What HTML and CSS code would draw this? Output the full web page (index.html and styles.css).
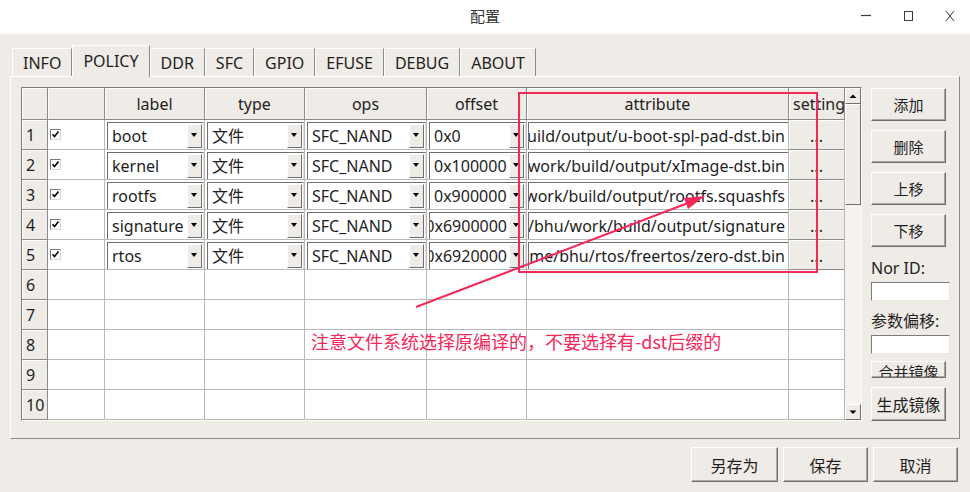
FILE: index.html
```html
<!DOCTYPE html>
<html lang="zh-CN">
<head>
    <meta charset="UTF-8">
    <title>配置</title>
    <link rel="stylesheet" href="styles.css">
</head>
<body>
<div class="window">
    <div class="titlebar">
        <span class="title">配置</span>
        <div class="controls">
            <svg viewBox="0 0 16 16"><path d="M3 6.5h10" stroke="#3a3a3a" stroke-width="1.2"/></svg>
            <svg viewBox="0 0 16 16"><rect x="4.5" y="2.5" width="8" height="9" fill="none" stroke="#3a3a3a" stroke-width="1"/></svg>
            <svg viewBox="0 0 16 16"><path d="M4 2l8 10M12 2l-8 10" stroke="#3a3a3a" stroke-width="1"/></svg>
        </div>
    </div>

    <ul class="tabs">
        <li class="tab">INFO</li>
        <li class="tab active">POLICY</li>
        <li class="tab">DDR</li>
        <li class="tab">SFC</li>
        <li class="tab">GPIO</li>
        <li class="tab">EFUSE</li>
        <li class="tab">DEBUG</li>
        <li class="tab">ABOUT</li>
    </ul>

    <div class="panel">
        <div class="gridbox">
            <table class="grid">
                <colgroup>
                    <col style="width:26px"><col style="width:57px"><col style="width:100px"><col style="width:100px">
                    <col style="width:122px"><col style="width:100px"><col style="width:262px"><col style="width:56px">
                </colgroup>
                <thead>
                    <tr>
                        <th><div class="c"></div></th>
                        <th><div class="c"></div></th>
                        <th><div class="c">label</div></th>
                        <th><div class="c">type</div></th>
                        <th><div class="c">ops</div></th>
                        <th><div class="c">offset</div></th>
                        <th><div class="c">attribute</div></th>
                        <th><div class="c setting-h">setting</div></th>
                    </tr>
                </thead>
                <tbody>
                    <tr>
                        <th class="rh"><div class="c">1</div></th>
                        <td><div class="c"><span class="box"><svg viewBox="0 0 9 9"><path d="M1.5 4.2l2 2.2 4-5" fill="none" stroke="#000" stroke-width="1.6"/></svg></span></div></td>
                        <td><div class="combo"><span class="val">boot</span><span class="drop"></span></div></td>
                        <td><div class="combo"><span class="val">文件</span><span class="drop"></span></div></td>
                        <td><div class="combo"><span class="val">SFC_NAND</span><span class="drop"></span></div></td>
                        <td><div class="combo"><span class="val">0x0</span><span class="drop"></span></div></td>
                        <td><div class="field"><span>/home/bhu/work/build/output/u-boot-spl-pad-dst.bin</span></div></td>
                        <td class="set"><div class="c">...</div></td>
                    </tr>
                    <tr>
                        <th class="rh"><div class="c">2</div></th>
                        <td><div class="c"><span class="box"><svg viewBox="0 0 9 9"><path d="M1.5 4.2l2 2.2 4-5" fill="none" stroke="#000" stroke-width="1.6"/></svg></span></div></td>
                        <td><div class="combo"><span class="val">kernel</span><span class="drop"></span></div></td>
                        <td><div class="combo"><span class="val">文件</span><span class="drop"></span></div></td>
                        <td><div class="combo"><span class="val">SFC_NAND</span><span class="drop"></span></div></td>
                        <td><div class="combo"><span class="val">0x100000</span><span class="drop"></span></div></td>
                        <td><div class="field"><span>/home/bhu/work/build/output/xImage-dst.bin</span></div></td>
                        <td class="set"><div class="c">...</div></td>
                    </tr>
                    <tr>
                        <th class="rh"><div class="c">3</div></th>
                        <td><div class="c"><span class="box"><svg viewBox="0 0 9 9"><path d="M1.5 4.2l2 2.2 4-5" fill="none" stroke="#000" stroke-width="1.6"/></svg></span></div></td>
                        <td><div class="combo"><span class="val">rootfs</span><span class="drop"></span></div></td>
                        <td><div class="combo"><span class="val">文件</span><span class="drop"></span></div></td>
                        <td><div class="combo"><span class="val">SFC_NAND</span><span class="drop"></span></div></td>
                        <td><div class="combo"><span class="val">0x900000</span><span class="drop"></span></div></td>
                        <td><div class="field"><span>/home/bhu/work/build/output/rootfs.squashfs</span></div></td>
                        <td class="set"><div class="c">...</div></td>
                    </tr>
                    <tr>
                        <th class="rh"><div class="c">4</div></th>
                        <td><div class="c"><span class="box"><svg viewBox="0 0 9 9"><path d="M1.5 4.2l2 2.2 4-5" fill="none" stroke="#000" stroke-width="1.6"/></svg></span></div></td>
                        <td><div class="combo"><span class="val">signature</span><span class="drop"></span></div></td>
                        <td><div class="combo"><span class="val">文件</span><span class="drop"></span></div></td>
                        <td><div class="combo"><span class="val">SFC_NAND</span><span class="drop"></span></div></td>
                        <td><div class="combo"><span class="val tail">0x6900000</span><span class="drop"></span></div></td>
                        <td><div class="field"><span>/home/bhu/work/build/output/signature</span></div></td>
                        <td class="set"><div class="c">...</div></td>
                    </tr>
                    <tr>
                        <th class="rh"><div class="c">5</div></th>
                        <td><div class="c"><span class="box"><svg viewBox="0 0 9 9"><path d="M1.5 4.2l2 2.2 4-5" fill="none" stroke="#000" stroke-width="1.6"/></svg></span></div></td>
                        <td><div class="combo"><span class="val">rtos</span><span class="drop"></span></div></td>
                        <td><div class="combo"><span class="val">文件</span><span class="drop"></span></div></td>
                        <td><div class="combo"><span class="val">SFC_NAND</span><span class="drop"></span></div></td>
                        <td><div class="combo"><span class="val tail">0x6920000</span><span class="drop"></span></div></td>
                        <td><div class="field"><span>/home/bhu/rtos/freertos/zero-dst.bin</span></div></td>
                        <td class="set"><div class="c">...</div></td>
                    </tr>
                    <tr><th class="rh"><div class="c">6</div></th><td><div class="c"></div></td><td></td><td></td><td></td><td></td><td></td><td></td></tr>
                    <tr><th class="rh"><div class="c">7</div></th><td><div class="c"></div></td><td></td><td></td><td></td><td></td><td></td><td></td></tr>
                    <tr><th class="rh"><div class="c">8</div></th><td><div class="c"></div></td><td></td><td></td><td></td><td></td><td></td><td></td></tr>
                    <tr><th class="rh"><div class="c">9</div></th><td><div class="c"></div></td><td></td><td></td><td></td><td></td><td></td><td></td></tr>
                    <tr><th class="rh"><div class="c">10</div></th><td><div class="c"></div></td><td></td><td></td><td></td><td></td><td></td><td></td></tr>
                </tbody>
            </table>
            <div class="vscroll">
                <div class="sarrow"><svg viewBox="0 0 14 14"><path d="M3.5 9h7L7 5.5z" fill="#000"/></svg></div>
                <div class="thumb"></div>
                <div class="track"></div>
                <div class="sarrow"><svg viewBox="0 0 14 14"><path d="M3.5 5.5h7L7 9z" fill="#000"/></svg></div>
            </div>
        </div>

        <div class="side">
            <button class="btn sbtn">添加</button>
            <button class="btn sbtn">删除</button>
            <button class="btn sbtn">上移</button>
            <button class="btn sbtn">下移</button>
            <label class="slabel">Nor ID:</label>
            <div class="input"></div>
            <label class="slabel">参数偏移:</label>
            <div class="input"></div>
            <button class="btn merge">合并镜像</button>
            <button class="btn make">生成镜像</button>
        </div>
    </div>

    <div class="footer">
        <button class="btn fbtn wide">另存为</button>
        <button class="btn fbtn">保存</button>
        <button class="btn fbtn">取消</button>
    </div>

    <svg class="markup" width="970" height="492" viewBox="0 0 970 492">
        <rect x="519" y="93" width="298" height="179" fill="none" stroke="#f5285a" stroke-width="2"/>
        <line x1="416" y1="307" x2="688" y2="203" stroke="#f5285a" stroke-width="2"/>
        <polygon points="705,196 688,209 684,198" fill="#f5285a"/>
    </svg>
    <p class="note">注意文件系统选择原编译的，不要选择有-dst后缀的</p>
</div>
</body>
</html>
```

FILE: styles.css
```css
*{
    box-sizing: border-box;
}
body{
    margin: 0;
    background-color: #efebe7;
    font-family: "Noto Sans", "Noto Sans CJK SC", sans-serif;
    font-size: 16px;
    color: #1e1e1e;
}
.window{
    position: relative;
    width: 970px;
    height: 492px;
    overflow: hidden;
}

/* title bar */
.titlebar{
    height: 34px;
    background-color: #fff;
    display: grid;
    grid-template-columns: 1fr auto 1fr;
    align-items: center;
}
.title{
    grid-column: 2;
    font-family: "Noto Sans CJK SC", sans-serif;
    font-size: 15px;
    color: #333;
    margin-top: -3px;
}
.controls{
    justify-self: end;
    display: flex;
    gap: 26px;
    padding-right: 12px;
}
.controls svg{
    width: 16px;
    height: 16px;
    display: block;
}

/* tabs */
.tabs{
    list-style: none;
    margin: 0;
    padding: 0 0 0 12px;
    height: 42px;
    display: flex;
    align-items: flex-end;
    position: relative;
    z-index: 2;
}
.tab{
    height: 28px;
    line-height: 29px;
    padding: 0 10px;
    border-top: 1px solid #fff;
    border-left: 1px solid #fff;
    border-right: 1px solid #8b8b8b;
    background-color: #efebe7;
}
.tab.active{
    height: 32px;
    line-height: 31px;
    margin-bottom: -1px;
}

/* panel */
.panel{
    margin: 0 10px;
    height: 363px;
    border-top: 1px solid #fff;
    border-left: 1px solid #fff;
    border-right: 1px solid #8b8b8b;
    border-bottom: 1px solid #8b8b8b;
    padding: 10px 9px 0 10px;
    display: flex;
    align-items: flex-start;
}
.gridbox{
    flex: none;
    width: 841px;
    height: 334px;
    border-top: 1px solid #7c7c7c;
    border-left: 1px solid #7c7c7c;
    border-right: 1px solid #fff;
    border-bottom: 1px solid #fff;
    display: flex;
    overflow: hidden;
}
.grid{
    flex: none;
    width: 823px;
    table-layout: fixed;
    border-collapse: separate;
    border-spacing: 0;
    align-self: flex-start;
}
.grid th,
.grid td{
    padding: 0;
    font-weight: normal;
    overflow: hidden;
    white-space: nowrap;
}
.grid td{
    background-color: #fff;
    border-right: 1px solid #b8b8b8;
    border-bottom: 1px solid #b8b8b8;
    height: 30px;
    vertical-align: top;
}
.grid th{
    background-color: #efebe7;
    border-right: 1px solid #8b8b8b;
    border-bottom: 1px solid #8b8b8b;
    box-shadow: inset 1px 1px #fff;
}
.grid thead .c{
    height: 31px;
    line-height: 32px;
    text-align: center;
}
.setting-h{
    text-align: left !important;
    padding-left: 4px;
}
.c{
    height: 29px;
    line-height: 29px;
}
.rh .c{
    text-align: left;
    padding-left: 4px;
    line-height: 31px;
}
.box{
    display: inline-block;
    width: 11px;
    height: 11px;
    margin: 9px 0 0 2px;
    border-top: 1px solid #7c7c7c;
    border-left: 1px solid #7c7c7c;
    border-right: 1px solid #d8d8d8;
    border-bottom: 1px solid #d8d8d8;
    vertical-align: top;
    background-color: #fff;
}
.box svg{
    display: block;
    width: 9px;
    height: 9px;
}
.combo{
    height: 27px;
    margin: 2px 0 0 2px;
    border-top: 1px solid #6f6f6f;
    border-left: 1px solid #6f6f6f;
    border-right: 1px solid #e0e0e0;
    display: flex;
    background-color: #fff;
}
.val{
    flex: 1;
    display: flex;
    overflow: hidden;
    padding-left: 4px;
    line-height: 27px;
}
.val.tail{
    justify-content: flex-end;
    padding-right: 2px;
}
.drop{
    width: 15px;
    margin: 1px 1px 1px 0;
    background-color: #efebe7;
    border-top: 1px solid #fff;
    border-left: 1px solid #fff;
    border-right: 1px solid #6f6f6f;
    border-bottom: 1px solid #6f6f6f;
    position: relative;
}
.drop::after{
    content: "";
    position: absolute;
    left: 3px;
    top: 8px;
    border-left: 3.5px solid transparent;
    border-right: 3.5px solid transparent;
    border-top: 4px solid #000;
}
.field{
    height: 27px;
    margin: 2px 0 0 1px;
    border-top: 1px solid #6f6f6f;
    border-left: 1px solid #6f6f6f;
    display: flex;
    justify-content: flex-end;
    overflow: hidden;
    padding-right: 3px;
    line-height: 27px;
    background-color: #fff;
}
.grid td.set{
    background-color: #efebe7;
    border-bottom-color: #8b8b8b;
    box-shadow: inset 1px 1px #fff;
}
.set .c{
    text-align: center;
    line-height: 33px;
}

/* scrollbar */
.vscroll{
    flex: none;
    width: 16px;
    display: flex;
    flex-direction: column;
    background: repeating-conic-gradient(#efebe7 0 25%, #fbfaf9 0 50%) 0 0 / 2px 2px;
}
.sarrow,
.thumb{
    background-color: #efebe7;
    border-top: 1px solid #fff;
    border-left: 1px solid #fff;
    border-right: 1px solid #6f6f6f;
    border-bottom: 1px solid #6f6f6f;
}
.sarrow{
    height: 16px;
}
.sarrow svg{
    display: block;
    width: 14px;
    height: 14px;
}
.thumb{
    height: 101px;
}
.track{
    flex: 1;
}

/* buttons */
.btn{
    font-family: "Noto Sans CJK SC", sans-serif;
    color: #1e1e1e;
    background-color: #efebe7;
    border-top: 1px solid #fff;
    border-left: 1px solid #fff;
    border-right: 1px solid #6f6f6f;
    border-bottom: 1px solid #6f6f6f;
    box-shadow: inset -1px -1px #a8a8a8;
    padding: 0;
}
.side{
    flex: none;
    margin: 1px 0 0 9px;
    width: 79px;
    display: flex;
    flex-direction: column;
    align-items: flex-start;
}
.sbtn{
    width: 75px;
    height: 33px;
    font-size: 15px;
    margin-bottom: 9px;
}
.slabel{
    height: 24px;
    line-height: 24px;
    font-size: 16px;
    margin-top: 8px;
}
.sbtn + .slabel{
    margin-top: 0;
}
.input{
    width: 79px;
    height: 19px;
    margin-top: 2px;
    background-color: #fff;
    border-top: 1px solid #7c7c7c;
    border-left: 1px solid #7c7c7c;
    border-right: 1px solid #e8e8e8;
    border-bottom: 1px solid #e8e8e8;
}
.merge{
    width: 75px;
    height: 17px;
    margin-top: 7px;
    overflow: hidden;
    font-size: 15px;
    line-height: 20px;
    display: flex;
    justify-content: center;
    align-items: flex-start;
}
.make{
    width: 75px;
    height: 34px;
    margin-top: 9px;
    font-size: 16px;
}

/* footer */
.footer{
    display: flex;
    justify-content: flex-end;
    gap: 5px;
    padding: 8px 12px 0 0;
}
.fbtn{
    width: 85px;
    height: 35px;
    font-size: 16px;
}
.fbtn.wide{
    width: 87px;
}

/* annotation drawn over the screenshot */
.markup{
    position: absolute;
    left: 0;
    top: 0;
    pointer-events: none;
    z-index: 5;
}
.note{
    position: absolute;
    left: 311px;
    top: 328px;
    margin: 0;
    font-family: "Noto Sans CJK SC", sans-serif;
    font-size: 18px;
    line-height: 26px;
    color: #f5285a;
    z-index: 5;
}
```
